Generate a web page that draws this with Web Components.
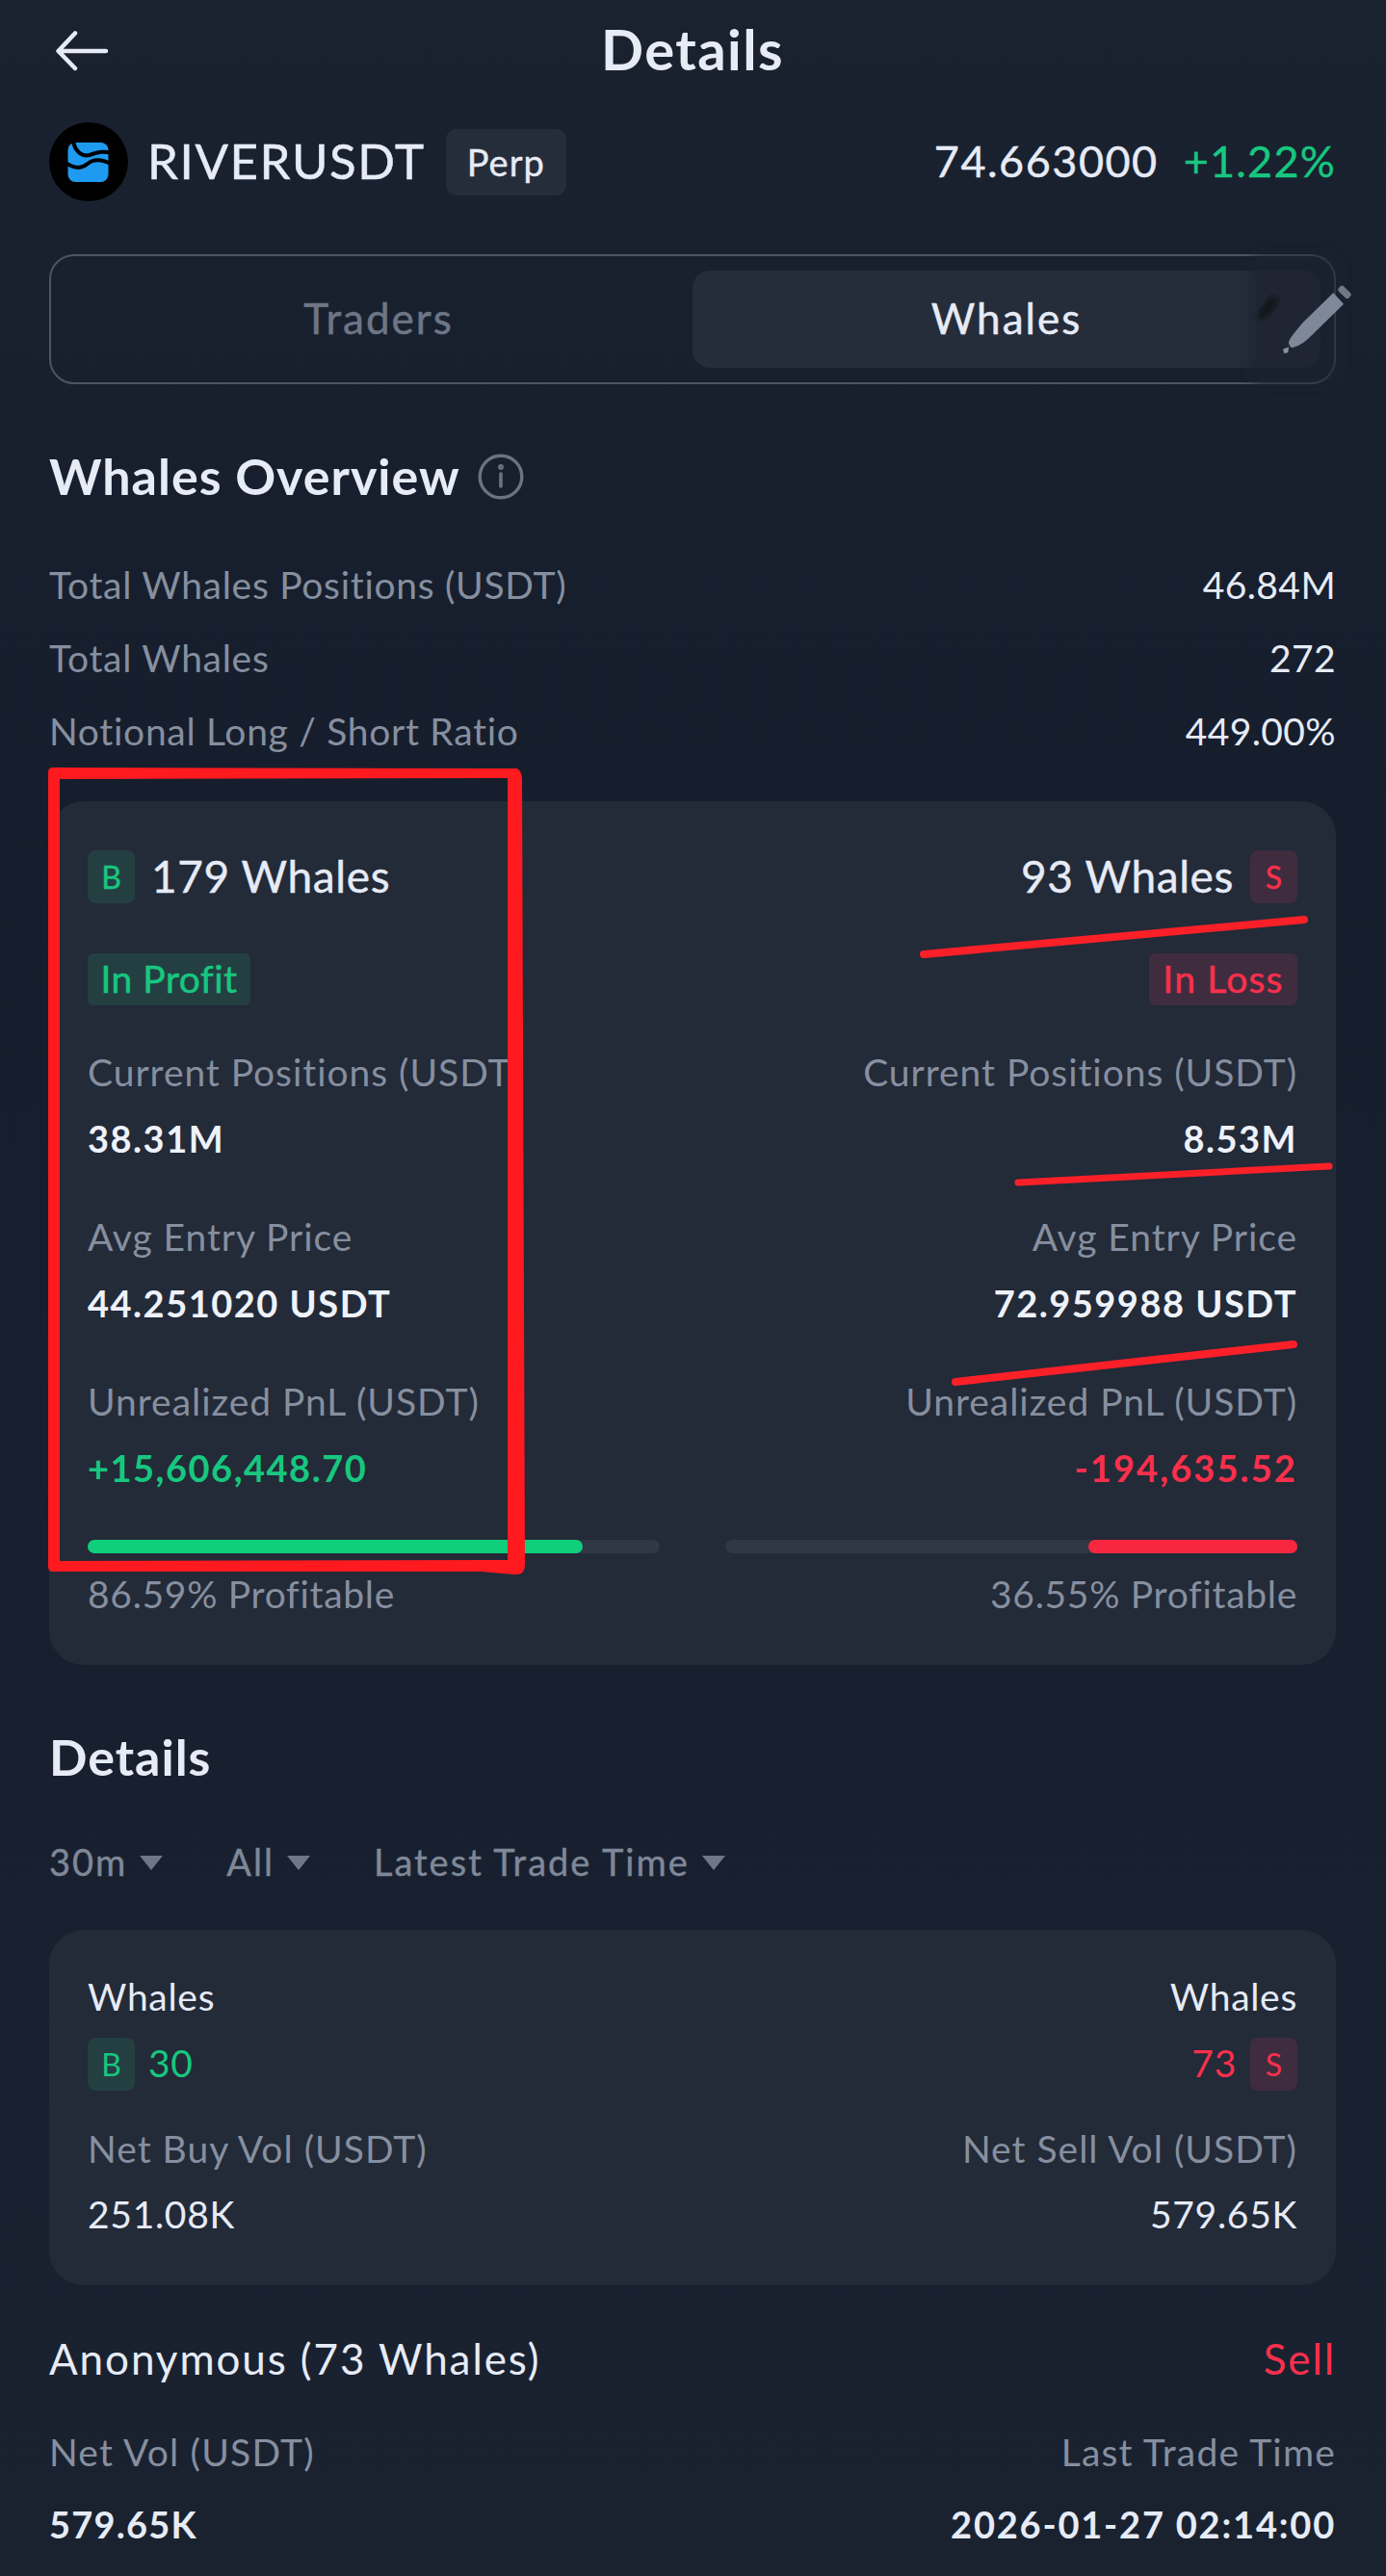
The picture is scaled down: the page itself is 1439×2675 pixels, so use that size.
<!DOCTYPE html>
<html>
<head>
<meta charset="utf-8">
<title>Details</title>
<style>
  html, body { margin: 0; padding: 0; }
  body {
    width: 1439px; height: 2675px; overflow: hidden; position: relative;
    background: linear-gradient(180deg, #1a2230 0%, #161e2d 30%, #182030 70%, #1a2230 100%);
    color: #e6ebf6;
    font-family: "Lato", "Noto Sans", sans-serif;
    font-size: 39px;
    letter-spacing: .7px;
  }
  main { display: flex; flex-direction: column; padding: 0 52px 0 51px; }
</style>
</head>
<body>
<main>
  <page-header>Details</page-header>
  <symbol-bar name="RIVERUSDT" kind="Perp" price="74.663000" change="+1.22%"></symbol-bar>
  <segment-tabs></segment-tabs>
  <section-title style="margin-top:66px" info>Whales Overview</section-title>
  <div style="margin-top:45px">
    <stat-row label="Total Whales Positions (USDT)">46.84M</stat-row>
    <stat-row label="Total Whales">272</stat-row>
    <stat-row label="Notional Long / Short Ratio">449.00%</stat-row>
  </div>
  <overview-card style="margin-top:34px">
    <whale-side slot="left" side="B" count="179 Whales" tag="In Profit" tone="up">
      <metric-block label="Current Positions (USDT)">38.31M</metric-block>
      <metric-block label="Avg Entry Price">44.251020 USDT</metric-block>
      <metric-block label="Unrealized PnL (USDT)" tone="up">+15,606,448.70</metric-block>
      <profit-bar slot="bar" from="0" to="86.59" tone="up"></profit-bar>
      <span slot="foot">86.59% Profitable</span>
    </whale-side>
    <whale-side slot="right" side="S" count="93 Whales" tag="In Loss" tone="down" end>
      <metric-block label="Current Positions (USDT)" end>8.53M</metric-block>
      <metric-block label="Avg Entry Price" end>72.959988 USDT</metric-block>
      <metric-block label="Unrealized PnL (USDT)" tone="down" end>-194,635.52</metric-block>
      <profit-bar slot="bar" from="63.45" to="100" tone="down"></profit-bar>
      <span slot="foot">36.55% Profitable</span>
    </whale-side>
  </overview-card>
  <section-title style="margin-top:66px">Details</section-title>
  <div class="filters" style="display:flex;gap:66px;margin-top:54px">
    <filter-chip>30m</filter-chip>
    <filter-chip>All</filter-chip>
    <filter-chip>Latest Trade Time</filter-chip>
  </div>
  <volume-card style="margin-top:45px"></volume-card>
  <trade-row style="margin-top:50px"></trade-row>
</main>
<ink-marks></ink-marks>

<script>
  // tiny helper, every element is just a template in an open shadow root
  function register(name, html, onConnect) {
    const tmpl = document.createElement('template');
    tmpl.innerHTML = html;
    customElements.define(name, class extends HTMLElement {
      constructor() {
        super();
        this.attachShadow({ mode: 'open' }).appendChild(tmpl.content.cloneNode(true));
      }
      connectedCallback() {
        if (onConnect) onConnect(this, this.shadowRoot);
      }
    });
  }

  register('page-header', `
    <style>
      :host { display: flex; align-items: center; justify-content: center; position: relative; height: 104px; box-sizing: border-box; padding-bottom: 3px; }
      svg { position: absolute; left: 6px; top: 31px; }
      .t { font-size: 58px; font-weight: 700; letter-spacing: 1.4px; color: #e6ebf6; }
    </style>
    <svg width="56" height="43" viewBox="0 0 56 43" fill="none" stroke="#e6ebf6" stroke-width="4.5" stroke-linecap="round" stroke-linejoin="round">
      <path d="M53 22H4M21 3.5 3.5 22 21 40"/>
    </svg>
    <span class="t"><slot></slot></span>
  `);

  register('symbol-bar', `
    <style>
      :host { display: flex; align-items: center; height: 82px; margin-top: 23px; }
      .logo { flex: none; width: 82px; height: 82px; }
      .name { font-size: 51px; margin-left: 20px; letter-spacing: 1.6px; -webkit-text-stroke: .5px currentColor; padding-bottom: 3px; }
      .kind { margin-left: 21px; width: 125px; height: 69px; border-radius: 11px; background: #252d3b;
              display: flex; align-items: center; justify-content: center; font-size: 38px; letter-spacing: 1px; -webkit-text-stroke: .4px currentColor; }
      .price { margin-left: auto; font-size: 45px; letter-spacing: 1.5px; -webkit-text-stroke: .4px currentColor; padding-bottom: 3px; }
      .change { margin-left: 26px; font-size: 45px; letter-spacing: 1.2px; -webkit-text-stroke: .4px currentColor; color: #17c77f; padding-bottom: 3px; }
    </style>
    <svg class="logo" viewBox="0 0 82 82">
      <circle cx="41" cy="41" r="41" fill="#000"/>
      <rect x="19.5" y="21" width="42" height="41" rx="8" fill="#1e9bf0"/>
      <path d="M25 18C26 30 34 36 42 34 48 32 54 29 64 32M16 41C26 49 34 48 40 43 46 38 54 38 64 43" fill="none" stroke="#000" stroke-width="4"/>
    </svg>
    <span class="name"></span><span class="kind"></span>
    <span class="price"></span><span class="change"></span>
  `, (el, root) => {
    for (const k of ['name', 'kind', 'price', 'change']) {
      root.querySelector('.' + k).textContent = el.getAttribute(k);
    }
  });

  register('segment-tabs', `
    <style>
      :host { display: grid; grid-template-columns: 1fr 1fr; position: relative; box-sizing: border-box;
              height: 135px; margin-top: 55px; padding: 15px 14px; border: 2px solid #4d5464; border-radius: 26px; font-size: 44px; letter-spacing: 2px; }
      div { display: flex; align-items: center; justify-content: center; -webkit-text-stroke: .5px currentColor; border-radius: 18px; padding-bottom: 3px; }
      .off { color: #6e7686; }
      .on { background: #252c3a; color: #e6ebf6; }
      svg { position: absolute; left: 1147px; top: -16px; }
    </style>
    <div class="off">Traders</div>
    <div class="on">Whales</div>
    <svg width="239" height="170" viewBox="0 0 717 510">
      <defs>
        <filter id="b1" x="-30%" y="-30%" width="160%" height="160%"><feGaussianBlur stdDeviation="14"/></filter>
        <filter id="b2"><feGaussianBlur stdDeviation="7"/></filter>
      </defs>
      <rect x="290" y="36" width="290" height="420" rx="50" fill="#1c212d" opacity=".62" filter="url(#b1)"/>
      <ellipse cx="350" cy="208" rx="16" ry="42" transform="rotate(38 350 208)" fill="#0f1218" opacity=".85" filter="url(#b2)"/>
      <path d="M553 162 585 197 480 300C465 316 440 331 424 333 418 331 414 324 414 316 418 300 440 278 455 258Z" fill="#7f8899"/>
      <rect x="566" y="149" width="44" height="22" rx="8" transform="rotate(44 588 160)" fill="#6f7889"/>
      <path d="M396 338 414 331 412 348 400 351Z" fill="#8a93a3"/>
    </svg>
  `);

  register('section-title', `
    <style>
      :host { display: flex; align-items: center; height: 60px; box-sizing: border-box; padding-bottom: 3px; font-size: 52px; font-weight: 700; letter-spacing: 1px; color: #e6ebf6; }
      svg { margin: 3px 0 0 18px; display: none; }
      :host([info]) svg { display: block; }
    </style>
    <slot></slot>
    <svg width="48" height="48" viewBox="0 0 48 48" fill="none" stroke="#6b7382" stroke-width="3.4" stroke-linecap="round">
      <circle cx="24" cy="24" r="21.8"/><path d="M24 21v13" stroke-width="3.6"/><circle cx="24" cy="14" r="1.2"/>
    </svg>
  `);

  register('stat-row', `
    <style>
      :host { display: flex; align-items: center; justify-content: space-between; height: 76px; box-sizing: border-box; padding-bottom: 3px; color: #e6ebf6; }
      .l { color: #868f9f; }
      .v { letter-spacing: .4px; }
    </style>
    <span class="l"></span><span class="v"><slot></slot></span>
  `, (el, root) => { root.querySelector('.l').textContent = el.getAttribute('label'); });

  register('side-badge', `
    <style>
      :host { display: flex; align-items: center; justify-content: center; flex: none; width: 49px; height: 55px; border-radius: 8px; font-size: 32px; letter-spacing: 0; }
      :host([side=B]) { background: #243f42; color: #17c77f; }
      :host([side=S]) { background: #402c3f; color: #f9304c; }
    </style>
    <slot></slot>
  `);

  register('pill-tag', `
    <style>
      :host { display: inline-flex; align-items: center; justify-content: center; height: 54px; box-sizing: border-box; padding-bottom: 3px; border-radius: 6px; font-size: 39px; -webkit-text-stroke: .5px currentColor; }
      :host([tone=up]) { width: 169px; letter-spacing: .5px; background: #243f42; color: #17c77f; }
      :host([tone=down]) { width: 154px; letter-spacing: 1.2px; background: #402c3f; color: #f9304c; }
    </style>
    <slot></slot>
  `);

  register('metric-block', `
    <style>
      :host { display: flex; flex-direction: column; white-space: nowrap; }
      :host([end]) { align-items: flex-end; }
      .l, .v { height: 46px; line-height: 43px; }
      .l { color: #868f9f; letter-spacing: .95px; }
      .v { margin-top: 23px; font-size: 38px; font-weight: 700; letter-spacing: 1.5px; color: #eef2fa; }
      :host([tone=up]) .v { color: #17c77f; }
      :host([tone=down]) .v { color: #f9304c; letter-spacing: 2.1px; }
    </style>
    <span class="l"></span><span class="v"><slot></slot></span>
  `, (el, root) => { root.querySelector('.l').textContent = el.getAttribute('label'); });

  register('profit-bar', `
    <style>
      :host { display: block; position: relative; height: 14px; border-radius: 7px; background: #303745; }
      i { position: absolute; top: 0; bottom: 0; border-radius: 7px; }
    </style>
    <i></i>
  `, (el, root) => {
    const fill = root.querySelector('i');
    fill.style.left = el.getAttribute('from') + '%';
    fill.style.right = (100 - el.getAttribute('to')) + '%';
    fill.style.background = el.getAttribute('tone') === 'up' ? '#0fcf7c' : '#f9263f';
  });

  register('whale-side', `
    <style>
      :host { display: flex; flex-direction: column; min-width: 0; }
      :host([end]) { align-items: stretch; text-align: right; }
      .head { display: flex; align-items: center; gap: 17px; height: 55px; font-size: 46px; letter-spacing: .6px; -webkit-text-stroke: .4px currentColor; }
      .count { padding-bottom: 3px; }
      :host([end]) .head { flex-direction: row-reverse; }
      .tag { display: flex; margin-top: 52px; height: 54px; margin-bottom: 48px; }
      :host([end]) .tag { justify-content: flex-end; }
      .metrics { display: flex; flex-direction: column; gap: 56px; }
      .bar { margin-top: 50px; }
      .foot { margin-top: 21px; height: 46px; line-height: 43px; color: #868f9f; }
    </style>
    <div class="head"><side-badge></side-badge><span class="count"></span></div>
    <div class="tag"><pill-tag></pill-tag></div>
    <div class="metrics"><slot></slot></div>
    <div class="bar"><slot name="bar"></slot></div>
    <div class="foot"><slot name="foot"></slot></div>
  `, (el, root) => {
    const badge = root.querySelector('side-badge');
    badge.setAttribute('side', el.getAttribute('side'));
    badge.textContent = el.getAttribute('side');
    root.querySelector('.count').textContent = el.getAttribute('count');
    const tag = root.querySelector('pill-tag');
    tag.setAttribute('tone', el.getAttribute('tone'));
    tag.textContent = el.getAttribute('tag');
  });

  register('overview-card', `
    <style>
      :host { display: grid; grid-template-columns: 594px 594px; column-gap: 68px;
              background: #232a38; border-radius: 36px; padding: 51px 40px 49px; }
    </style>
    <slot name="left"></slot><slot name="right"></slot>
  `);

  register('filter-chip', `
    <style>
      :host { display: flex; align-items: center; gap: 13px; height: 50px; box-sizing: border-box; padding-bottom: 3px; font-size: 38px; letter-spacing: 2px; -webkit-text-stroke: .4px currentColor; color: #7f8898; }
      i { width: 0; height: 0; margin-top: 3px; border-left: 12.5px solid transparent; border-right: 12.5px solid transparent; border-top: 15px solid #6f7786; }
    </style>
    <span><slot></slot></span><i></i>
  `);

  register('volume-card', `
    <style>
      :host { display: flex; justify-content: space-between; background: #232a38; border-radius: 36px; padding: 48px 40px 49px; }
      .col { display: flex; flex-direction: column; }
      .col.r { align-items: flex-end; }
      .w, .l, .v { height: 46px; line-height: 43px; }
      .l { color: #868f9f; margin-top: 39px; letter-spacing: 1px; }
      .v { margin-top: 22px; }
      .n { display: flex; align-items: center; gap: 14px; height: 55px; margin-top: 18px; }
      .n span { padding-bottom: 3px; }
      .g { color: #17c77f; } .d { color: #f9304c; }
    </style>
    <div class="col">
      <div class="w">Whales</div>
      <div class="n"><side-badge side="B">B</side-badge><span class="g">30</span></div>
      <div class="l">Net Buy Vol (USDT)</div>
      <div class="v">251.08K</div>
    </div>
    <div class="col r">
      <div class="w">Whales</div>
      <div class="n"><span class="d">73</span><side-badge side="S">S</side-badge></div>
      <div class="l">Net Sell Vol (USDT)</div>
      <div class="v">579.65K</div>
    </div>
  `);

  register('trade-row', `
    <style>
      :host { display: grid; grid-template-columns: auto auto; justify-content: space-between; }
      .h { height: 56px; line-height: 53px; font-size: 44px; letter-spacing: 1.9px; }
      .l, .v { height: 46px; line-height: 43px; }
      .l { margin-top: 46px; color: #868f9f; letter-spacing: 1.2px; }
      .v { margin-top: 29px; font-size: 38px; font-weight: 700; letter-spacing: 1.2px; }
      .v.r { letter-spacing: 1.8px; }
      .r { text-align: right; }
      .d { color: #f9304c; }
    </style>
    <div class="h">Anonymous (73 Whales)</div><div class="h r d">Sell</div>
    <div class="l">Net Vol (USDT)</div><div class="l r">Last Trade Time</div>
    <div class="v">579.65K</div><div class="v r">2026-01-27 02:14:00</div>
  `);

  // the hand drawn red annotations lie over the finished screenshot
  register('ink-marks', `
    <style>
      :host { display: block; position: absolute; left: 0; top: 0; width: 1439px; height: 2675px; pointer-events: none; }
    </style>
    <svg width="1439" height="2675" viewBox="0 0 1439 2675">
      <path fill="#fe1a1f" fill-rule="evenodd" d="M55 797 536 798Q541 799 542 808L545 1625Q545 1636 534 1635L500 1632H55Q50 1632 50 1627V802Q50 797 55 797ZM62 809V1621L527 1620V808Z"/>
      <g stroke="#fb2028" stroke-linecap="round" fill="none">
        <path d="M959 991 1354 955" stroke-width="8"/>
        <path d="M1057 1228 1380 1211" stroke-width="7"/>
        <path d="M992 1435 1343 1396" stroke-width="8"/>
      </g>
    </svg>
  `);
</script>
</body>
</html>
